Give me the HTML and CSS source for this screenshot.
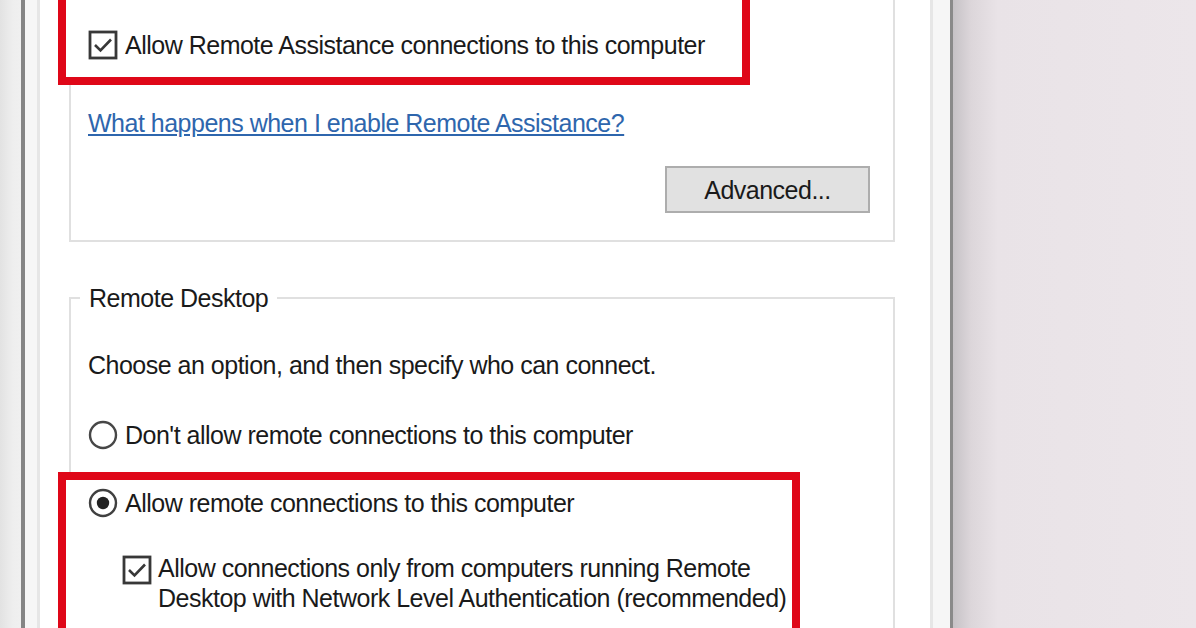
FILE: index.html
```html
<!DOCTYPE html>
<html lang="en">
<head>
  <meta charset="UTF-8">
  <meta name="viewport" content="width=device-width, initial-scale=1">
  <link rel="stylesheet" href="styles.css">
  <title>System Properties - Remote</title>
</head>
<body>
<div class="screen">
  <div class="frame-edge"></div>
  <div class="window">
    <div class="tab-page">

      <fieldset class="group group-assist">
        <div class="marked marked-assist">
          <label class="option">
            <svg class="mark" viewBox="0 0 30 30"><rect x="2" y="2" width="26" height="26" fill="#fff" stroke="#383838" stroke-width="2.8"/><path d="M7 15l5.5 5.5L23 9.5" fill="none" stroke="#383838" stroke-width="2.6"/></svg>
            <span>Allow Remote Assistance connections to this computer</span>
          </label>
        </div>
        <p class="help"><a href="#">What happens when I enable Remote Assistance?</a></p>
        <div class="actions"><button class="btn">Advanced...</button></div>
      </fieldset>

      <fieldset class="group group-desktop">
        <legend>Remote Desktop</legend>
        <p class="intro">Choose an option, and then specify who can connect.</p>
        <label class="option option-off">
          <svg class="mark" viewBox="0 0 30 30"><circle cx="15" cy="15" r="13" fill="#fff" stroke="#474747" stroke-width="2.4"/></svg>
          <span>Don't allow remote connections to this computer</span>
        </label>
        <div class="marked marked-desktop">
          <label class="option">
            <svg class="mark" viewBox="0 0 30 30"><circle cx="15" cy="15" r="13" fill="#fff" stroke="#404040" stroke-width="2.4"/><circle cx="15" cy="15" r="6.2" fill="#222"/></svg>
            <span>Allow remote connections to this computer</span>
          </label>
          <label class="option option-sub">
            <svg class="mark" viewBox="0 0 30 30"><rect x="2" y="2" width="26" height="26" fill="#fff" stroke="#383838" stroke-width="2.8"/><path d="M7 15l5.5 5.5L23 9.5" fill="none" stroke="#383838" stroke-width="2.6"/></svg>
            <span>Allow connections only from computers running Remote<br>Desktop with Network Level Authentication (recommended)</span>
          </label>
        </div>
      </fieldset>

    </div>
  </div>
  <div class="desktop"></div>
</div>
</body>
</html>
```

FILE: styles.css
```css
* {
  margin: 0;
  padding: 0;
  box-sizing: border-box;
}
html {
  overflow: hidden;
}
body {
  width: 1196px;
  height: 628px;
  overflow: hidden;
  font-family: "Liberation Sans", Arial, sans-serif;
  font-size: 25px;
  letter-spacing: -0.5px;
  line-height: 30px;
  color: #1a1a1a;
  background: #ebe5e9;
}
.screen {
  display: flex;
  height: 628px;
}
.frame-edge {
  width: 21px;
  background: linear-gradient(to right, #e2e2e2, #eeeeee 60%, #f0f0f0);
}
.window {
  width: 932px;
  height: 100%;
  overflow: hidden;
  background: #f6f6f6;
  border-left: 4px solid #858585;
  border-right: 3px solid #8a8a8a;
  padding: 0 17px 0 12px;
}
.tab-page {
  display: flow-root;
  height: 100%;
  background: #ffffff;
  border-left: 3px solid #e6e6e6;
  border-right: 3px solid #e6e6e6;
  padding: 0 35px 0 29px;
}
.desktop {
  flex: 1;
  background: linear-gradient(to right, #c6c2c6, #dcd6da 18px, #e9e3e7 45px, #ece6ea);
}

/* group boxes */
.group {
  min-width: 0;
  border: 2px solid #e0e0e0;
  padding: 0 23px 27px 17px;
}
.group legend {
  margin-left: -8px;
  padding: 0 9px;
  line-height: 30px;
}
.group-assist {
  margin-top: -40px;
}
.group-desktop {
  margin-top: 41px;
}

/* red annotation boxes */
.marked {
  border: 8px solid #df0718;
  background: #fff;
  margin-left: -30px;
  padding-left: 22px;
}
.marked-assist {
  margin-top: 20px;
  margin-right: 120px;
  padding-top: 40px;
  padding-bottom: 17px;
}
.marked-desktop {
  margin-top: 22px;
  margin-right: 70px;
  padding-top: 8px;
  padding-bottom: 30px;
}

.option {
  display: flex;
  align-items: center;
  gap: 7px;
  white-space: nowrap;
}
.mark {
  width: 30px;
  height: 30px;
  flex-shrink: 0;
}
.option-off {
  margin-top: 40px;
}
.option-sub {
  align-items: flex-start;
  margin-top: 35px;
  margin-left: 34px;
  gap: 6px;
}
.option-sub .mark {
  margin-top: 2px;
}

.help {
  margin-top: 23px;
}
.help a {
  color: #2e66ad;
  text-decoration: underline;
  text-underline-offset: 2px;
}
.actions {
  display: flex;
  justify-content: flex-end;
  margin-top: 28px;
}
.btn {
  width: 205px;
  height: 47px;
  font: inherit;
  letter-spacing: inherit;
  color: #1a1a1a;
  background: #e1e1e1;
  border: 2px solid #adadad;
}
.intro {
  margin-top: 37px;
}
```
